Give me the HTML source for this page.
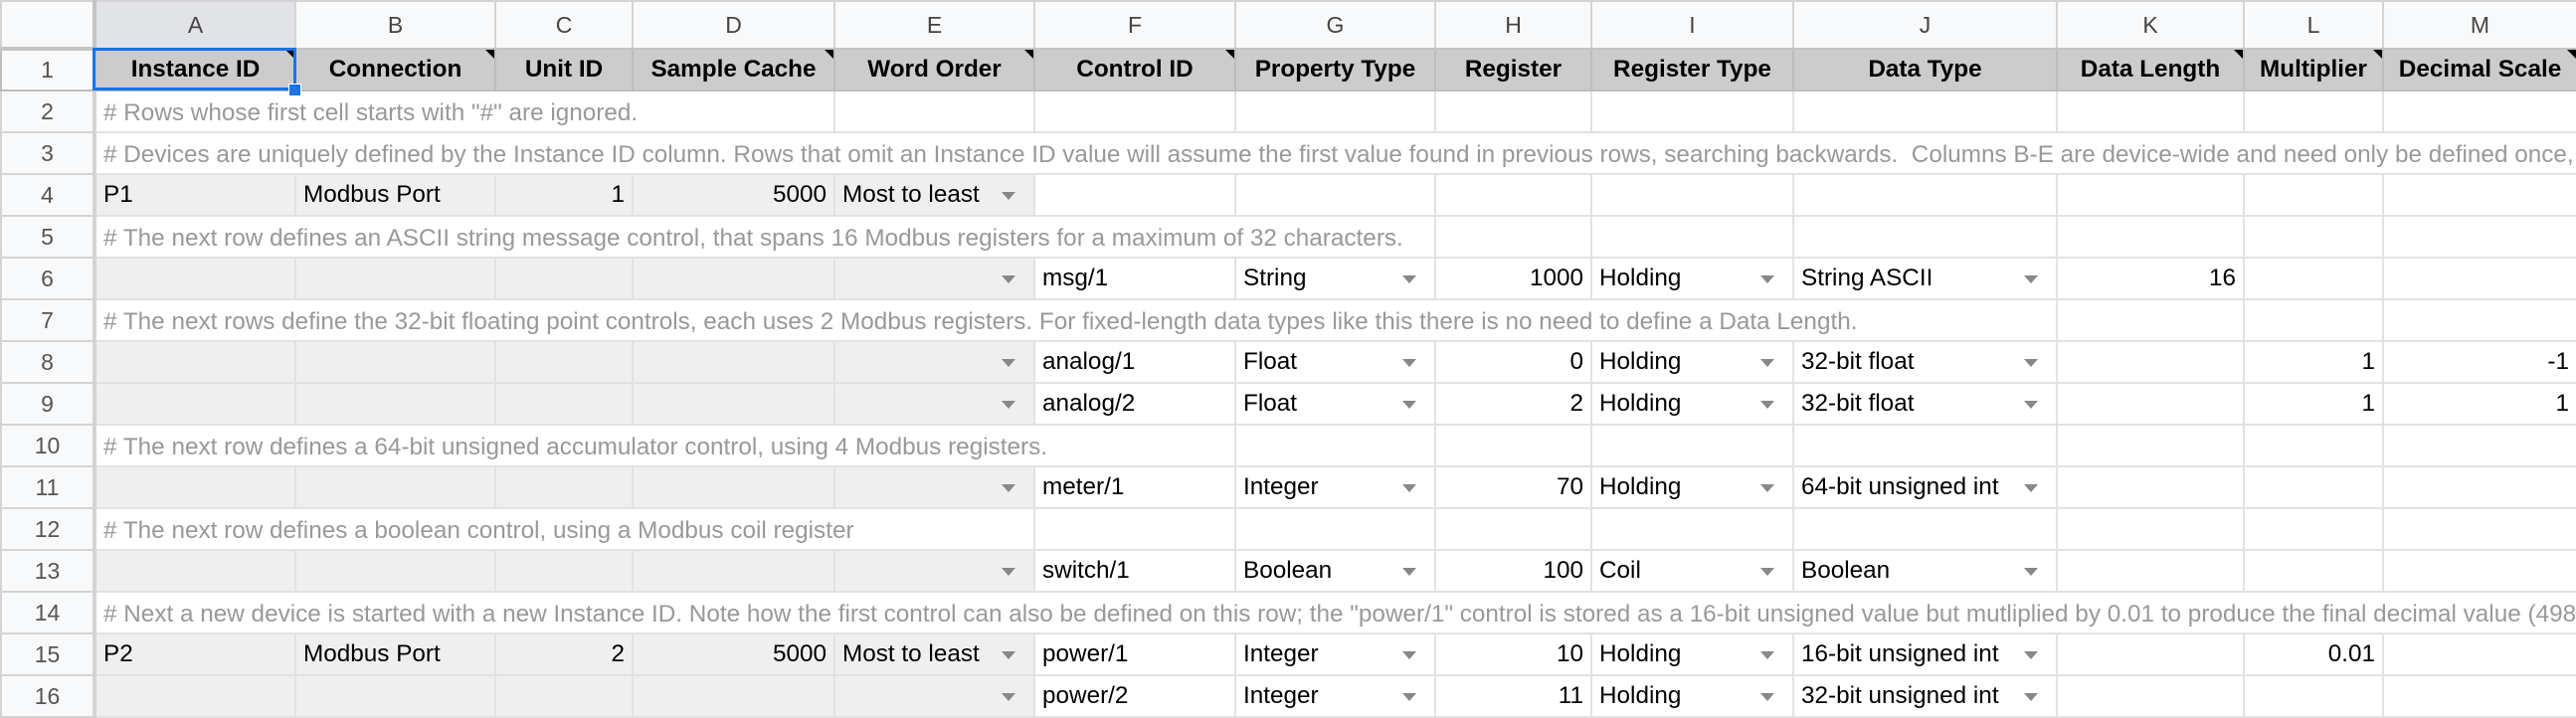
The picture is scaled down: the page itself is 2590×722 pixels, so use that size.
<!DOCTYPE html>
<html><head><meta charset="utf-8"><style>
html,body{margin:0;padding:0;background:#fff;width:2590px;height:722px;overflow:hidden}
body{font-family:"Liberation Sans",Arial,sans-serif;}
table{border-collapse:collapse;table-layout:fixed;position:absolute;left:0;top:0;width:2590px}
td{height:42px;border:2px solid #e2e2e2;padding:0 7px;font-size:24.3px;color:#000;white-space:nowrap;overflow:hidden;position:relative;box-sizing:border-box;}
tr.ch td{height:48px;background:#f8f9fa;color:#444;text-align:center;font-size:23px;border-color:#d4d4d4;border-bottom:2px solid #c4c4c4}
tr.ch td.sel{background:#e1e3e6}
td.rh{background:#f8f9fa;color:#555;text-align:center;font-size:23px;padding:0;border-right:4px solid #c4c4c4;border-color:#d4d4d4}
tr.ch td.corner{border-right:4px solid #c4c4c4;border-bottom:4px solid #c4c4c4}
tr.h td{background:#cccccc;font-weight:bold;text-align:center;border-color:#bdbdbd;border-bottom:2px solid #bdbdbd}
tr.h td.rh{font-weight:normal;background:#f8f9fa}
td.g{background:#efefef}
td.n{text-align:right}
td.c{color:#999}
.ct{position:absolute;left:7px;top:8px}
.dd:after{content:"";position:absolute;right:18px;top:17px;border-left:7px solid transparent;border-right:7px solid transparent;border-top:8px solid #888}
.tri:before{content:"";position:absolute;right:0;top:0;border-left:9px solid transparent;border-top:9px solid #000}
.selbox{position:absolute;left:93px;top:48px;width:205px;height:43px;border:3px solid #1a73e8;box-sizing:border-box}
.handle{position:absolute;left:290px;top:84px;width:11px;height:11px;background:#1a73e8;border:1px solid #fff}
</style></head><body>
<table>
<colgroup><col style="width:94px"><col style="width:202px"><col style="width:201px"><col style="width:138px"><col style="width:203px"><col style="width:201px"><col style="width:202px"><col style="width:201px"><col style="width:157px"><col style="width:203px"><col style="width:265px"><col style="width:188px"><col style="width:140px"><col style="width:195px"></colgroup>
<tr class="ch"><td class="corner"></td><td class="sel">A</td><td>B</td><td>C</td><td>D</td><td>E</td><td>F</td><td>G</td><td>H</td><td>I</td><td>J</td><td>K</td><td>L</td><td>M</td></tr>
<tr class="h"><td class="rh">1</td><td class="tri">Instance ID</td><td class="tri">Connection</td><td>Unit ID</td><td class="tri">Sample Cache</td><td class="tri">Word Order</td><td class="tri">Control ID</td><td>Property Type</td><td>Register</td><td>Register Type</td><td>Data Type</td><td class="tri">Data Length</td><td class="tri">Multiplier</td><td class="tri">Decimal Scale</td></tr>
<tr><td class="rh">2</td><td class="c" colspan="4"><span class="ct"># Rows whose first cell starts with "#" are ignored.</span></td><td></td><td></td><td></td><td></td><td></td><td></td><td></td><td></td><td></td></tr>
<tr><td class="rh">3</td><td class="c" colspan="13"><span class="ct"># Devices are uniquely defined by the Instance ID column. Rows that omit an Instance ID value will assume the first value found in previous rows, searching backwards.&nbsp; Columns B-E are device-wide and need only be defined once, when the device is first defined.</span></td></tr>
<tr><td class="rh">4</td><td class="g">P1</td><td class="g">Modbus Port</td><td class="g n">1</td><td class="g n">5000</td><td class="g dd">Most to least</td><td></td><td></td><td></td><td></td><td></td><td></td><td></td><td></td></tr>
<tr><td class="rh">5</td><td class="c" colspan="7"><span class="ct"># The next row defines an ASCII string message control, that spans 16 Modbus registers for a maximum of 32 characters.</span></td><td></td><td></td><td></td><td></td><td></td><td></td></tr>
<tr><td class="rh">6</td><td class="g"></td><td class="g"></td><td class="g"></td><td class="g"></td><td class="g dd"></td><td>msg/1</td><td class="dd">String</td><td class="n">1000</td><td class="dd">Holding</td><td class="dd">String ASCII</td><td class="n">16</td><td></td><td></td></tr>
<tr><td class="rh">7</td><td class="c" colspan="10"><span class="ct"># The next rows define the 32-bit floating point controls, each uses 2 Modbus registers. For fixed-length data types like this there is no need to define a Data Length.</span></td><td></td><td></td><td></td></tr>
<tr><td class="rh">8</td><td class="g"></td><td class="g"></td><td class="g"></td><td class="g"></td><td class="g dd"></td><td>analog/1</td><td class="dd">Float</td><td class="n">0</td><td class="dd">Holding</td><td class="dd">32-bit float</td><td></td><td class="n">1</td><td class="n">-1</td></tr>
<tr><td class="rh">9</td><td class="g"></td><td class="g"></td><td class="g"></td><td class="g"></td><td class="g dd"></td><td>analog/2</td><td class="dd">Float</td><td class="n">2</td><td class="dd">Holding</td><td class="dd">32-bit float</td><td></td><td class="n">1</td><td class="n">1</td></tr>
<tr><td class="rh">10</td><td class="c" colspan="6"><span class="ct"># The next row defines a 64-bit unsigned accumulator control, using 4 Modbus registers.</span></td><td></td><td></td><td></td><td></td><td></td><td></td><td></td></tr>
<tr><td class="rh">11</td><td class="g"></td><td class="g"></td><td class="g"></td><td class="g"></td><td class="g dd"></td><td>meter/1</td><td class="dd">Integer</td><td class="n">70</td><td class="dd">Holding</td><td class="dd">64-bit unsigned int</td><td></td><td></td><td></td></tr>
<tr><td class="rh">12</td><td class="c" colspan="5"><span class="ct"># The next row defines a boolean control, using a Modbus coil register</span></td><td></td><td></td><td></td><td></td><td></td><td></td><td></td><td></td></tr>
<tr><td class="rh">13</td><td class="g"></td><td class="g"></td><td class="g"></td><td class="g"></td><td class="g dd"></td><td>switch/1</td><td class="dd">Boolean</td><td class="n">100</td><td class="dd">Coil</td><td class="dd">Boolean</td><td></td><td></td><td></td></tr>
<tr><td class="rh">14</td><td class="c" colspan="13"><span class="ct"># Next a new device is started with a new Instance ID. Note how the first control can also be defined on this row; the "power/1" control is stored as a 16-bit unsigned value but mutliplied by 0.01 to produce the final decimal value (498.2)</span></td></tr>
<tr><td class="rh">15</td><td class="g">P2</td><td class="g">Modbus Port</td><td class="g n">2</td><td class="g n">5000</td><td class="g dd">Most to least</td><td>power/1</td><td class="dd">Integer</td><td class="n">10</td><td class="dd">Holding</td><td class="dd">16-bit unsigned int</td><td></td><td class="n">0.01</td><td></td></tr>
<tr><td class="rh">16</td><td class="g"></td><td class="g"></td><td class="g"></td><td class="g"></td><td class="g dd"></td><td>power/2</td><td class="dd">Integer</td><td class="n">11</td><td class="dd">Holding</td><td class="dd">32-bit unsigned int</td><td></td><td></td><td></td></tr>
</table>
<div class="selbox"></div><div class="handle"></div>
</body></html>
